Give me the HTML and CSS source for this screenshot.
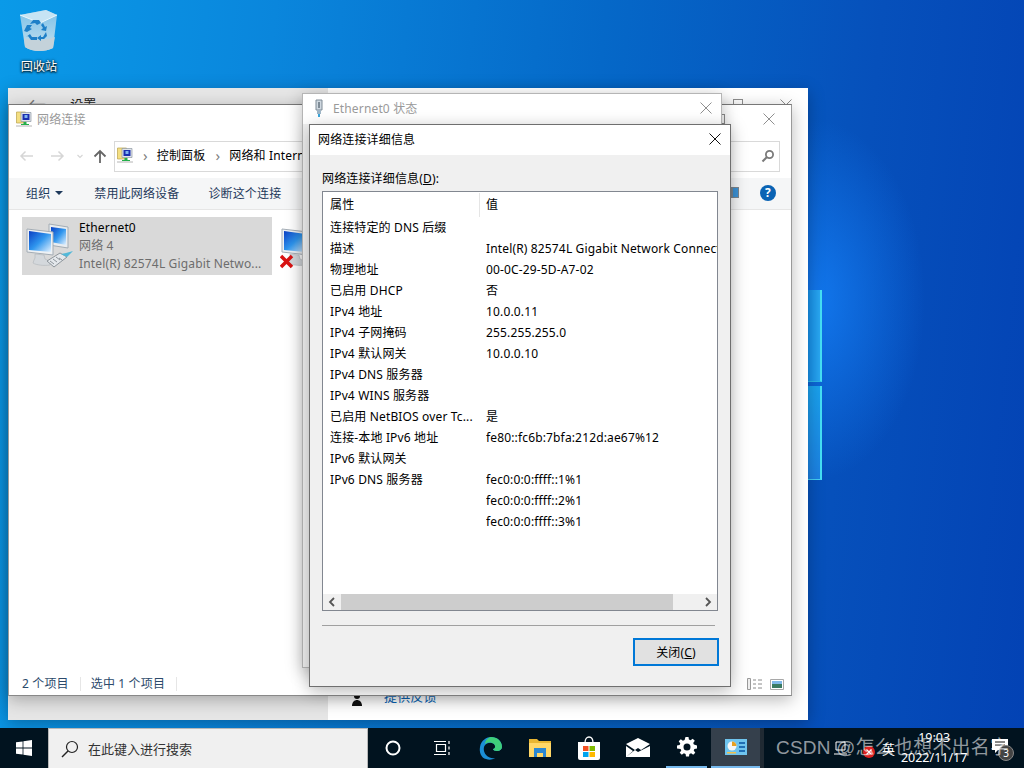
FILE: index.html
```html
<!DOCTYPE html>
<html lang="zh-CN">
<head>
<meta charset="utf-8">
<title>网络连接</title>
<link rel="stylesheet" href="styles.css">
</head>
<body>
<svg class="defs" width="0" height="0">
  <defs>
    <linearGradient id="scr" x1="0" y1="0" x2="1" y2="1"><stop offset="0" stop-color="#0a3fc4"/><stop offset=".5" stop-color="#2f96ee"/><stop offset="1" stop-color="#e4f2ff"/></linearGradient>
    <linearGradient id="bin" x1="0" y1="0" x2="0" y2="1"><stop offset="0" stop-color="#7cc0e8"/><stop offset=".6" stop-color="#a8d4ec"/><stop offset="1" stop-color="#d0dde4"/></linearGradient>
    <symbol id="pc" viewBox="0 0 50 50">
      <path d="M24 3l19 3v21l-19-3z" fill="#e8ecf0" stroke="#a4adb5"/>
      <path d="M26 6l15 2v16l-15-3z" fill="url(#scr)"/>
      <path d="M2 8l26 3v23L2 31z" fill="#eef1f4" stroke="#a4adb5"/>
      <path d="M4 10l22 3v18L4 29z" fill="url(#scr)"/>
      <path d="M10 33l9 1 1 4 6 3-1 3c-6 1-14 0-17-2l1-3 1-2z" fill="#d4d8dc" stroke="#b0b5ba" stroke-width=".6"/>
    </symbol>
    <symbol id="netfolder" viewBox="0 0 16 16">
      <path d="M.5 1h9v11h-9z" fill="#f4df82" stroke="#b9a24a" stroke-width=".7"/>
      <path d="M5 1.500h10v9H5z" fill="#dfe4ea" stroke="#8f99a3" stroke-width=".7"/>
      <path d="M6.500 3h7v6h-7z" fill="#1a2fb0"/>
      <path d="M8.500 4h3v3h-3z" fill="#7fb4f0"/>
      <path d="M7.500 11h3v2H13v1H5v-1h2.500z" fill="#23b04a"/>
      <path d="M0 15h16" stroke="#b4b4b4"/>
    </symbol>
    <symbol id="close" viewBox="0 0 12 12"><path d="M.5.500l11 11M11.500.500l-11 11" fill="none" stroke="currentColor"/></symbol>
  </defs>
</svg>

<main class="desktop">
  <div class="pane pane-top"></div>
  <div class="pane pane-bottom"></div>

  <div class="desk-icon">
    <svg width="40" height="44" viewBox="0 0 40 44">
      <path d="M1 6L27 1l11 5-4 33c-8 4-21 4-28-1z" fill="url(#bin)"/>
      <path d="M1 6L27 1l11 5-17 8z" fill="#c6e4f4"/>
      <path d="M1 6l20 8 17-8" fill="none" stroke="#e8f6fc"/>
      <path d="M5 29c9 3 21 3 31-1l-2 11c-8 4-21 4-28-1z" fill="#c4d2da"/>
      <path d="M5 22l3-6h5l-2 3 2 1-5 3zM11 15l3-4h6l2 3-4 2-2-2zM24 14l2 4 2-1-1 5-5-1 2-2-2-3zM27 23l1 4-3 3h-3v2l-4-3 4-3v2h2zM11 25l2 3h5v3h-6l-3-4-2 1z" fill="#1e80c8"/>
    </svg>
    <span class="desk-label">回收站</span>
  </div>

  <section class="win settings">
    <div class="settings-side">
      <div class="settings-head"><span class="back">←</span><span>设置</span></div>
    </div>
    <div class="settings-main">
      <div class="settings-ctrl"><span class="maxbox"></span><svg class="x x-gray"><use href="#close"/></svg></div>
      <div class="feedback">
        <svg width="12" height="14" viewBox="0 0 12 14"><circle cx="6" cy="4" r="3" fill="#111"/><path d="M1 14c0-8 10-8 10 0z" fill="#111"/></svg>
        <span>提供反馈</span>
      </div>
    </div>
  </section>

  <section class="win network">
    <header class="net-title">
      <svg width="16" height="16"><use href="#netfolder"/></svg>
      <span>网络连接</span>
      <span class="maxbox maxbox-net"></span>
      <svg class="x x-gray"><use href="#close"/></svg>
    </header>
    <div class="nav">
      <svg class="nav-arrows" width="90" height="16" viewBox="0 0 90 16">
        <path d="M15 8H3m4.500-4.500L3 8l4.500 4.500" fill="none" stroke="#d6d6d6" stroke-width="1.500"/>
        <path d="M33 8h12m-4.500-4.500L45 8l-4.500 4.500" fill="none" stroke="#d6d6d6" stroke-width="1.500"/>
        <path d="M59.500 7l2.500 2.500L64.500 7" fill="none" stroke="#d6d6d6" stroke-width="1.200"/>
        <path d="M82 15V3m-5.500 5.500L82 3l5.500 5.500" fill="none" stroke="#666" stroke-width="1.800"/>
      </svg>
      <div class="addr">
        <svg width="16" height="16"><use href="#netfolder"/></svg>
        <span class="chev">›</span><span>控制面板</span>
        <span class="chev">›</span><span>网络和 Internet</span>
      </div>
      <div class="search">
        <svg width="14" height="14" viewBox="0 0 14 14"><circle cx="8.500" cy="5.500" r="3.600" fill="none" stroke="#7a7a7a" stroke-width="1.800"/><path d="M6 8l-4.500 4.500" stroke="#7a7a7a" stroke-width="2"/></svg>
      </div>
    </div>
    <div class="toolbar">
      <span class="tool tool-org">组织<i class="caret"></i></span>
      <span class="tool">禁用此网络设备</span>
      <span class="tool">诊断这个连接</span>
      <span class="tool-spacer"></span>
      <svg class="viewbtn" width="12" height="11" viewBox="0 0 12 11"><path d="M0 0h12v11H0z" fill="#7d8790"/><path d="M6 1h5v9H6z" fill="#3d93d6"/></svg>
      <span class="help">?</span>
    </div>
    <div class="conn-list">
      <div class="conn conn-sel">
        <div class="conn-icon">
          <svg width="50" height="50"><use href="#pc"/></svg>
          <svg class="plug" width="28" height="18" viewBox="0 0 28 18"><path d="M1 11l13-8 7 4-13 10z" fill="#e4e8ec" stroke="#8e959b"/><path d="M4 11l4 3m-1-5l4 3m-1-5l4 3M13 8l3 2" stroke="#8e959b"/><path d="M15 4l5-1 7-2-6 6z" fill="#52b8d8"/></svg>
        </div>
        <div class="conn-text">
          <span class="conn-name">Ethernet0</span>
          <span class="conn-sub">网络 4</span>
          <span class="conn-sub">Intel(R) 82574L Gigabit Netwo...</span>
        </div>
      </div>
      <div class="conn conn-next">
        <div class="conn-icon">
          <svg width="50" height="50"><use href="#pc"/></svg>
          <svg class="redx" width="15" height="15" viewBox="0 0 15 15"><path d="M2 2l11 11M13 2L2 13" stroke="#d81313" stroke-width="3.500"/></svg>
        </div>
      </div>
    </div>
    <footer class="net-status">
      <span class="count">2 个项目</span>
      <span class="count">选中 1 个项目</span>
      <span class="tool-spacer"></span>
      <svg width="16" height="12" viewBox="0 0 16 12"><path d="M.5.500h3v11h-3z" fill="#eee" stroke="#9a9a9a"/><path d="M6 2h3M11 2h4M6 6h3M11 6h4M6 10h3M11 10h4" stroke="#8a8a8a"/></svg>
      <svg class="pic-view" width="14" height="11" viewBox="0 0 14 11"><path d="M.5.500h13v10H.5z" fill="#fff" stroke="#a8a8a8"/><path d="M2 2h10v3H2z" fill="#7fb8e8"/><path d="M2 5h10v4H2z" fill="#3a7a62"/></svg>
    </footer>
  </section>

  <section class="win status">
    <header class="status-title">
      <svg width="12" height="18" viewBox="0 0 12 18"><path d="M3 1h6v10H3z" fill="#cfd8e0" stroke="#7e8b96"/><path d="M5 3h2v6H5z" fill="#7e8b96"/><path d="M4 11h4v4H4z" fill="#9fb6c6"/><path d="M5 15h2v3H5z" fill="#3aa6dc"/></svg>
      <span>Ethernet0 状态</span>
      <svg class="x x-gray x-push"><use href="#close"/></svg>
    </header>
    <div class="status-body"></div>
  </section>

  <section class="win dialog">
    <header class="dlg-title">
      <span>网络连接详细信息</span>
      <svg class="x x-dark"><use href="#close"/></svg>
    </header>
    <div class="dlg-body">
      <label class="dlg-label">网络连接详细信息(<u>D</u>):</label>
      <div class="list">
        <div class="list-head">
          <span class="col-name">属性</span>
          <span class="col-val">值</span>
        </div>
        <div class="rows">
          <div class="row"><span>连接特定的 DNS 后缀</span><span></span></div>
          <div class="row"><span>描述</span><span>Intel(R) 82574L Gigabit Network Connection</span></div>
          <div class="row"><span>物理地址</span><span>00-0C-29-5D-A7-02</span></div>
          <div class="row"><span>已启用 DHCP</span><span>否</span></div>
          <div class="row"><span>IPv4 地址</span><span>10.0.0.11</span></div>
          <div class="row"><span>IPv4 子网掩码</span><span>255.255.255.0</span></div>
          <div class="row"><span>IPv4 默认网关</span><span>10.0.0.10</span></div>
          <div class="row"><span>IPv4 DNS 服务器</span><span></span></div>
          <div class="row"><span>IPv4 WINS 服务器</span><span></span></div>
          <div class="row"><span>已启用 NetBIOS over Tc...</span><span>是</span></div>
          <div class="row"><span>连接-本地 IPv6 地址</span><span>fe80::fc6b:7bfa:212d:ae67%12</span></div>
          <div class="row"><span>IPv6 默认网关</span><span></span></div>
          <div class="row"><span>IPv6 DNS 服务器</span><span>fec0:0:0:ffff::1%1</span></div>
          <div class="row"><span></span><span>fec0:0:0:ffff::2%1</span></div>
          <div class="row"><span></span><span>fec0:0:0:ffff::3%1</span></div>
        </div>
        <div class="hscroll">
          <svg width="18" height="16" viewBox="0 0 18 16"><path d="M11 4L7 8l4 4" fill="none" stroke="#555" stroke-width="1.800"/></svg>
          <div class="track"><div class="thumb"></div></div>
          <svg width="18" height="16" viewBox="0 0 18 16"><path d="M7 4l4 4-4 4" fill="none" stroke="#555" stroke-width="1.800"/></svg>
        </div>
      </div>
      <div class="divider"></div>
      <div class="dlg-actions"><button class="btn">关闭(<u>C</u>)</button></div>
    </div>
  </section>

  <div class="taskbar">
    <div class="start">
      <svg width="16" height="16" viewBox="0 0 16 16"><path d="M0 2.300l6.600-.9v6.200H0zM7.400 1.300L16 0v7.600H7.400zM0 8.400h6.600v6.200L0 13.700zM7.400 8.400H16V16l-8.600-1.300z" fill="#fff"/></svg>
    </div>
    <div class="search-box">
      <svg width="18" height="18" viewBox="0 0 18 18"><circle cx="11" cy="7" r="5.500" fill="none" stroke="#222" stroke-width="1.200"/><path d="M7 11l-6 6" stroke="#222" stroke-width="1.400"/></svg>
      <span>在此键入进行搜索</span>
    </div>
    <div class="tb-item"><svg width="16" height="16" viewBox="0 0 16 16"><circle cx="8" cy="8" r="6.500" fill="none" stroke="#fff" stroke-width="2"/></svg></div>
    <div class="tb-item"><svg width="16" height="16" viewBox="0 0 16 16"><path d="M2.500 4.500h9v7h-9zM0 1.500h12M0 14.500h12M15 1v3M15 6.500v3M15 12v3" fill="none" stroke="#fff" stroke-width="1.200"/></svg></div>
    <div class="tb-item"><svg width="24" height="24" viewBox="0 0 24 24"><path d="M1 11C2 4 8 1 12 1c6 0 11 4 11 10 0 2-2 4-5 4-2 0-4-1-4-2 3 0 3-5-1-6-6-1-9 3-8 8 1 4 5 8 11 7-3 2-6 2-9 1-5-1-7-7-6-12z" fill="#1b8ed6"/><path d="M12 1c6 0 11 4 11 10 0 2-2 4-5 4-2 0-4-1-4-2 3 0 3-5-1-6-3-1-6 0-7 1 0-3 3-7 6-7z" fill="#3fcf7a"/></svg></div>
    <div class="tb-item"><svg width="22" height="18" viewBox="0 0 22 18"><path d="M0 0h8l2 2h12v16H0z" fill="#e8b632"/><path d="M0 4h22v14H0z" fill="#ffd767"/><path d="M5 9h12v9h-3v-4H8v4H5z" fill="#2a87d2"/></svg></div>
    <div class="tb-item"><svg width="24" height="24" viewBox="0 0 24 24"><path d="M8 7c0-8 8-8 8 0" fill="none" stroke="#fff" stroke-width="1.300"/><path d="M1 6h22v16a2 2 0 0 1-2 2H3a2 2 0 0 1-2-2z" fill="#fff"/><path d="M6 10h5.500v5H6z" fill="#f25022"/><path d="M12.500 10H18v5h-5.500z" fill="#7fba00"/><path d="M6 16h5.500v5H6z" fill="#00a4ef"/><path d="M12.500 16H18v5h-5.500z" fill="#ffb900"/></svg></div>
    <div class="tb-item"><svg width="24" height="20" viewBox="0 0 24 20"><path d="M0 6L12 0l12 6-9 6-3-2-3 2z" fill="#fff"/><path d="M0 8l7 5-7 6zM24 8v11H0l9-7 3 2z" fill="#fff"/></svg></div>
    <div class="tb-item tb-open tb-settings"><svg width="20" height="20" viewBox="0 0 20 20"><path fill="#fff" fill-rule="evenodd" d="M8.500 0h3l.4 2.600 1.700.7L15.700 1.700l2.100 2.100-1.600 2.100.7 1.700L20 8.500v3l-2.600.4-.7 1.700 1.600 2.100-2.100 2.100-2.100-1.600-1.700.7-.4 2.600h-3l-.4-2.600-1.700-.7-2.100 1.600-2.100-2.100 1.600-2.100-.7-1.700L0 11.500v-3l2.600-.4.700-1.700L1.700 4.300 3.800 2.200l2.100 1.600 1.700-.7zM10 6.500a3.500 3.500 0 1 0 0 7 3.500 3.500 0 0 0 0-7z"/></svg></div>
    <div class="tb-item tb-active tb-open"><svg width="22" height="18" viewBox="0 0 22 18"><path d="M0 1h22v16H0z" fill="#6fc4ee"/><circle cx="7" cy="8" r="4.500" fill="#f6f6f6"/><path d="M7 8V3.500A4.500 4.500 0 0 1 11.500 8z" fill="#e8a020"/><path d="M14 4h6v2h-6zM14 8h6v2h-6zM14 12h6v2h-6z" fill="#1f6fb5"/><path d="M2 14h9v1.500H2z" fill="#f2c14e"/></svg></div>
    <div class="tb-sep"></div>
    <div class="tray">
      <svg class="tray-net" width="16" height="14" viewBox="0 0 16 14"><path d="M2 1h9v8H2zM0 13h13" fill="none" stroke="#fff"/></svg>
      <svg class="tray-err" width="12" height="12" viewBox="0 0 12 12"><circle cx="6" cy="6" r="6" fill="#d22"/><path d="M3.500 3.500l5 5M8.500 3.500l-5 5" stroke="#fff" stroke-width="1.200"/></svg>
      <span class="tray-ime">英</span>
      <div class="clock"><span>19:03</span><span>2022/11/17</span></div>
      <div class="notify">
        <svg width="16" height="14" viewBox="0 0 16 14"><path d="M0 0h16v11H6l-3 3v-3H0z" fill="#fff"/><path d="M3 3h10M3 6h10" stroke="#111"/></svg>
        <span class="notify-badge">3</span>
      </div>
    </div>
    <span class="watermark">CSDN @怎么也想不出名字</span>
  </div>
</main>
</body>
</html>
```
FILE: styles.css
```css
* { box-sizing: border-box; }
html, body { margin: 0; height: 100%; overflow: hidden; }
body {
  font-family: "Noto Sans", "Noto Sans CJK SC", sans-serif;
  font-size: 12px;
  letter-spacing: .15px;
  color: #000;
}
.defs { position: absolute; }

.desktop {
  position: relative;
  width: 1024px;
  height: 768px;
  overflow: hidden;
  background:
    radial-gradient(ellipse 110px 180px at 815px 300px, rgba(20,125,245,.85), rgba(20,125,245,0) 100%),
    linear-gradient(96deg, #0a9ae8 0%, #0a86dc 25%, #0568c8 55%, #0650bb 80%, #0342b4 100%);
}
.pane { position: absolute; left: 808px; width: 14px; border-right: 2px solid #45e0f5; }
.pane-top { top: 290px; height: 92px; background: linear-gradient(90deg, #1690ea, #2aa8f2); border-bottom: 1px solid #2bb8e8; }
.pane-bottom { top: 386px; height: 94px; background: linear-gradient(180deg, #1aa2ee, #1c80e2); border-bottom: 1px solid #45d0f5; }

.desk-icon {
  position: absolute; left: 8px; top: 9px; width: 62px;
  display: flex; flex-direction: column; align-items: center; gap: 6px;
}
.desk-label { color: #fff; line-height: 16px; text-shadow: 0 0 3px #000, 0 1px 2px #000; }

.win { position: absolute; background: #fff; box-shadow: 0 4px 16px rgba(0,0,0,.28); }

.x { display: block; flex: none; width: 12px; height: 12px; }
.x-gray { color: #8f8f8f; }
.x-dark { color: #111; }
.x-push { margin-left: auto; }
.maxbox { display: block; width: 10px; height: 10px; border: 1px solid #8f8f8f; }

.settings { left: 8px; top: 88px; width: 800px; height: 632px; display: flex; }
.settings-side { width: 320px; background: #e6e6e6; }
.settings-head { display: flex; gap: 24px; height: 30px; padding: 4px 0 0 20px; color: #222; font-size: 13px; line-height: 24px; }
.back { color: #777; font-size: 18px; }
.settings-main { flex: 1; display: flex; flex-direction: column; justify-content: space-between; }
.settings-ctrl { display: flex; justify-content: flex-end; gap: 37px; padding: 11px 16px 0 0; height: 28px; }
.feedback { display: flex; align-items: flex-start; gap: 21px; padding: 0 0 14px 23px; color: #0a64b4; font-size: 13px; line-height: 18px; }
.feedback svg { margin-top: 5px; }

.network { left: 8px; top: 104px; width: 784px; height: 592px; display: flex; flex-direction: column; border: 1px solid #9a9a9a; border-bottom-color: #888; border-top: 1px solid #777; }
.net-title { display: flex; align-items: center; gap: 5px; height: 29px; padding: 0 16px 2px 7px; color: #9a9a9a; font-size: 12px; }
.maxbox-net { margin-left: auto; margin-right: 33px; }
.nav { display: flex; align-items: center; height: 32px; margin-top: 6px; padding: 0 11px 0 9px; }
.nav-arrows { flex: none; }
.addr { display: flex; align-items: center; flex: 1; height: 31px; margin-left: 6px; padding: 0 0 2px 2px; gap: 6px; border: 1px solid #d9d9d9; border-right: 0; white-space: nowrap; overflow: hidden; }
.chev { color: #808080; font-size: 15px; padding: 0 3px 0 4px; }
.search { display: flex; align-items: center; justify-content: flex-end; width: 60px; height: 31px; padding-right: 4px; border: 1px solid #d9d9d9; border-left: 0; }
.toolbar { display: flex; align-items: center; height: 32px; margin-top: 6px; padding: 0 15px 2px 17px; background: #f5f6f7; border-bottom: 1px solid #e6e6e6; color: #1e395b; }
.tool { margin-right: 29px; }
.tool-org { display: flex; align-items: center; margin-right: 31px; }
.caret { width: 0; height: 0; margin-left: 5px; border: 4px solid transparent; border-top: 4px solid #1e395b; border-bottom: 0; }
.tool-spacer { flex: 1; }
.viewbtn { margin-right: 21px; }
.help { display: flex; align-items: center; justify-content: center; width: 16px; height: 16px; border-radius: 50%; background: #0a63b4; color: #fff; font-weight: 700; font-size: 12px; line-height: 1; }
.conn-list { flex: 1; display: flex; gap: 8px; padding: 7px 0 0 13px; align-items: flex-start; }
.conn { display: flex; height: 58px; }
.conn-sel { width: 250px; background: #d9d9d9; }
.conn-icon { position: relative; width: 50px; height: 50px; margin: 4px 0 0 3px; flex: none; }
.plug { position: absolute; left: 21px; top: 29px; }
.redx { position: absolute; left: 0; top: 36px; }
.conn-next .conn-icon { margin-left: 0; }
.conn-next .redx { left: -1px; top: 33px; }
.conn-next { width: 22px; overflow: hidden; }
.conn-text { display: flex; flex-direction: column; padding: 2px 0 0 4px; line-height: 18px; white-space: nowrap; }
.conn-sub { color: #6d6d6d; }
.net-status { display: flex; align-items: center; height: 25px; padding: 3px 7px 0 13px; color: #2c4a6b; }
.count { margin-right: 10px; padding-right: 11px; border-right: 1px solid #e6e6e6; line-height: 14px; }
.pic-view { margin-left: 7px; }

.status { left: 302px; top: 93px; width: 420px; height: 575px; border: 1px solid #b5b5b5; display: flex; flex-direction: column; }
.status-title { display: flex; align-items: center; gap: 8px; height: 30px; padding: 0 9px 2px 10px; color: #9a9a9a; }
.status-body { flex: 1; background: #f0f0f0; }

.dialog { left: 309px; top: 124px; width: 422px; height: 563px; border: 1px solid #6f6f6f; display: flex; flex-direction: column; }
.dlg-title { display: flex; align-items: center; justify-content: space-between; height: 30px; flex: none; padding: 0 9px 2px 8px; }
.dlg-body { flex: 1; background: #f0f0f0; padding: 15px 12px 0; }
.dlg-label { display: block; line-height: 18px; margin-bottom: 3px; }
.list { width: 396px; height: 420px; background: #fff; border: 1px solid #828790; display: flex; flex-direction: column; }
.list-head { display: grid; grid-template-columns: 157px 1fr; height: 25px; flex: none; line-height: 24px; }
.col-name { padding-left: 7px; border-right: 1px solid #e5e5e5; margin: 1px 0; }
.col-val { padding-left: 6px; margin-top: 1px; }
.rows { flex: 1; overflow: hidden; }
.row { display: grid; grid-template-columns: 156px 239px; height: 21px; line-height: 21px; padding-left: 7px; white-space: nowrap; }
.row span { overflow: hidden; }
.hscroll { display: flex; align-items: center; height: 16px; background: #f0f0f0; flex: none; }
.track { flex: 1; height: 16px; }
.thumb { width: 332px; height: 16px; background: #cdcdcd; }
.divider { height: 1px; width: 393px; margin-top: 14px; background: #a0a0a0; }
.dlg-actions { display: flex; justify-content: flex-end; margin: 12px -1px 0 0; }
.btn { width: 86px; height: 28px; padding: 0; background: #e1e1e1; border: 2px solid #0078d7; font: inherit; letter-spacing: inherit; color: #000; }

.taskbar { position: absolute; left: 0; top: 728px; width: 1024px; height: 40px; display: flex; background: #01131f; }
.start { width: 48px; display: flex; align-items: center; justify-content: center; }
.search-box { width: 320px; display: flex; align-items: center; gap: 9px; padding-left: 12px; background: #f0f0f0; border: 1px solid #b8b8b8; border-bottom: 0; color: #333; font-size: 13px; letter-spacing: 0; }
.tb-item { width: 49px; display: flex; align-items: center; justify-content: center; height: 40px; }
.tb-settings { width: 41px; margin: 0 4px; }
.tb-open { border-bottom: 2px solid #76b9ed; }
.tb-active { background: #35404c; }
.tb-sep { width: 4px; margin-right: 2px; background: #202a33; height: 40px; }
.tray { flex: 1; display: flex; align-items: center; padding-left: 68px; color: #fff; }
.tray-err { position: relative; margin: 8px 0 0 13px; }
.tray-ime { margin-left: 7px; font-size: 13px; }
.clock { display: flex; flex-direction: column; align-items: center; width: 70px; margin-left: 4px; font-size: 12.500px; letter-spacing: 0; line-height: 20px; color: #fff; }
.notify { position: relative; margin-left: 23px; }
.notify-badge { position: absolute; left: 6px; top: 6px; width: 16px; height: 16px; border-radius: 50%; background: #444; border: 1px solid #888; color: #fff; font-size: 10px; line-height: 14px; text-align: center; }
.watermark { position: absolute; left: 776px; top: 8px; color: rgba(255,255,255,.58); font-size: 19px; letter-spacing: .2px; line-height: 24px; white-space: nowrap; font-family: "Liberation Sans", "Noto Sans CJK SC", sans-serif; }
```
